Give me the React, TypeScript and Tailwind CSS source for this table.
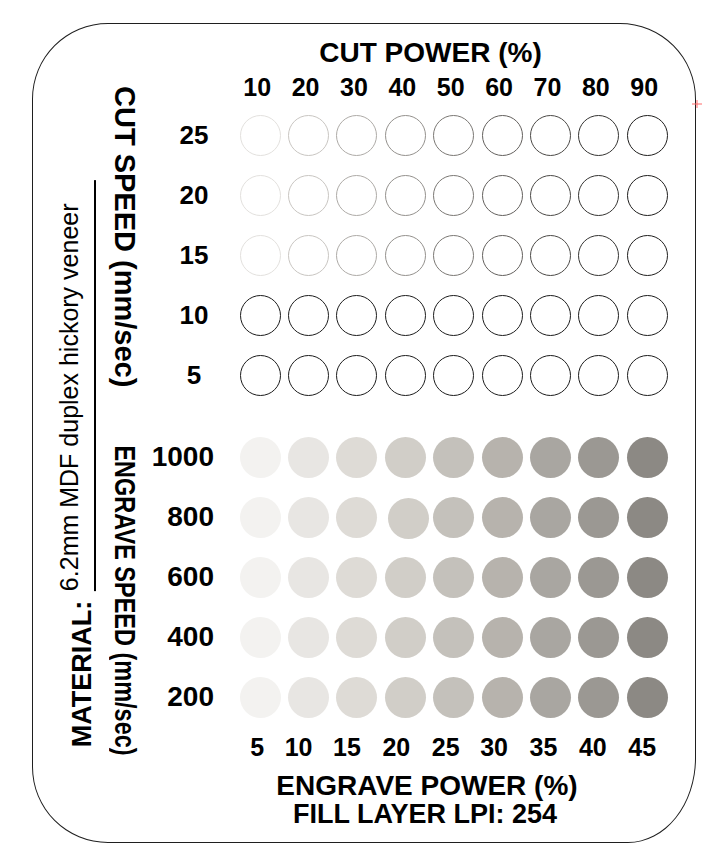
const sans = "font-['Liberation_Sans',Arial,sans-serif]";

const cutPowers = [10, 20, 30, 40, 50, 60, 70, 80, 90];
const cutSpeeds = [25, 20, 15, 10, 5];
const engraveSpeeds = [1000, 800, 600, 400, 200];
const engravePowers = [5, 10, 15, 20, 25, 30, 35, 40, 45];

// bottom labels drift left of their columns in the source sheet
const engraveShift = [
  "-translate-x-[3px]",
  "-translate-x-[10px]",
  "-translate-x-[10px]",
  "-translate-x-[9px]",
  "-translate-x-[8px]",
  "-translate-x-[8px]",
  "-translate-x-[7px]",
  "-translate-x-[6px]",
  "-translate-x-[5px]",
];

// ring colour per cut power column (fast rows only)
const rings = [
  "border-[#e3e1de]",
  "border-[#c9c6c2]",
  "border-[#aeaba7]",
  "border-[#94918d]",
  "border-[#7b7874]",
  "border-[#63605d]",
  "border-[#4c4a47]",
  "border-[#353432]",
  "border-[#1f1e1d]",
];

const fills = [
  "bg-[#f3f2f0]",
  "bg-[#e8e6e3]",
  "bg-[#dedbd6]",
  "bg-[#d1cec8]",
  "bg-[#c4c1bb]",
  "bg-[#b7b3ad]",
  "bg-[#a9a6a1]",
  "bg-[#9b9893]",
  "bg-[#8c8984]",
];

const cols = "grid grid-cols-[86px_repeat(9,48.375px)]";

function CutRow({ speed }: { speed: number }) {
  const solid = speed <= 10;
  return (
    <div className={`${cols} h-[60px] items-center justify-items-center`}>
      <span className="pl-[2px] text-[26px] font-bold leading-none">{speed}</span>
      {rings.map((ring, i) => (
        <div
          key={i}
          className={`size-[41px] rounded-full border-[1.5px] ${solid ? "border-[#1c1c1c]" : ring}`}
        />
      ))}
    </div>
  );
}

function EngraveRow({ speed }: { speed: number }) {
  return (
    <div className={`${cols} h-[60px] items-center justify-items-center`}>
      <span className="justify-self-end pr-[22px] text-[28px] font-bold leading-none">
        {speed}
      </span>
      {fills.map((fill, i) => (
        <div
          key={i}
          className={`size-[41px] rounded-full ${fill} ${
            speed === 800 && i === 3 ? "translate-x-[3px] translate-y-[1px]" : ""
          }`}
        />
      ))}
    </div>
  );
}

export default function App() {
  return (
    <div className={`h-[854px] w-[715px] bg-white pl-[32px] pt-[23px] text-black ${sans}`}>
      <div className="relative flex h-[820px] w-[664px] rounded-[76px] rounded-br-[68px_85px] border border-[#1f1f1f]">
        {/* rotated side labels */}
        <div className="flex w-[117px] shrink-0 items-start">
          <div className="ml-[24px] mt-[156px] flex rotate-180 items-end gap-[10px] [writing-mode:vertical-rl]">
            <span className="text-[27px] font-bold leading-none">MATERIAL:</span>
            <span className="border-l-2 border-black pb-[23px] pl-[12px] text-[25px] leading-none">
              6.2mm MDF duplex hickory veneer
            </span>
          </div>
          <div className="ml-[14px] flex flex-col">
            <div className="mt-[62px] text-[29px] font-bold leading-none [writing-mode:vertical-rl]">
              CUT SPEED (mm/sec)
            </div>
            <div className="mt-[22px] scale-y-[0.81] text-[29px] font-bold leading-none [writing-mode:vertical-rl]">
              ENGRAVE SPEED (mm/sec)
            </div>
          </div>
        </div>

        {/* chart */}
        <div className="flex flex-col">
          <div className="ml-[40px] mt-[15px] w-[481px] text-center text-[28px] font-bold leading-none">
            CUT POWER (%)
          </div>
          <div className={`${cols} mt-[8px] h-[25px] text-center text-[25px] font-bold leading-none`}>
            <span />
            {cutPowers.map((p) => (
              <span key={p} className="-translate-x-[3px]">
                {p}
              </span>
            ))}
          </div>

          <div className="mt-[5px] flex flex-col">
            {cutSpeeds.map((s) => (
              <CutRow key={s} speed={s} />
            ))}
          </div>

          <div className="mt-[22px] flex flex-col">
            {engraveSpeeds.map((s) => (
              <EngraveRow key={s} speed={s} />
            ))}
          </div>

          <div className={`${cols} mt-[8px] h-[25px] text-center text-[25px] font-bold leading-none`}>
            <span />
            {engravePowers.map((p, i) => (
              <span key={p} className={engraveShift[i]}>
                {p}
              </span>
            ))}
          </div>

          <div className="ml-[40px] mt-[12px] w-[474px] text-center text-[28px] font-bold leading-none">
            ENGRAVE POWER (%)
          </div>
          <div className="ml-[40px] mt-[1px] w-[470px] text-center text-[27px] font-bold leading-none">
            FILL LAYER LPI: 254
          </div>
        </div>

        {/* registration mark */}
        <svg className="absolute left-[658px] top-[74px]" width="12" height="12">
          <line x1="1" y1="6" x2="11" y2="6" stroke="#ff6b6b" strokeWidth="1" />
          <line x1="6" y1="2" x2="6" y2="10" stroke="#ff6b6b" strokeWidth="1" />
        </svg>
      </div>
    </div>
  );
}
